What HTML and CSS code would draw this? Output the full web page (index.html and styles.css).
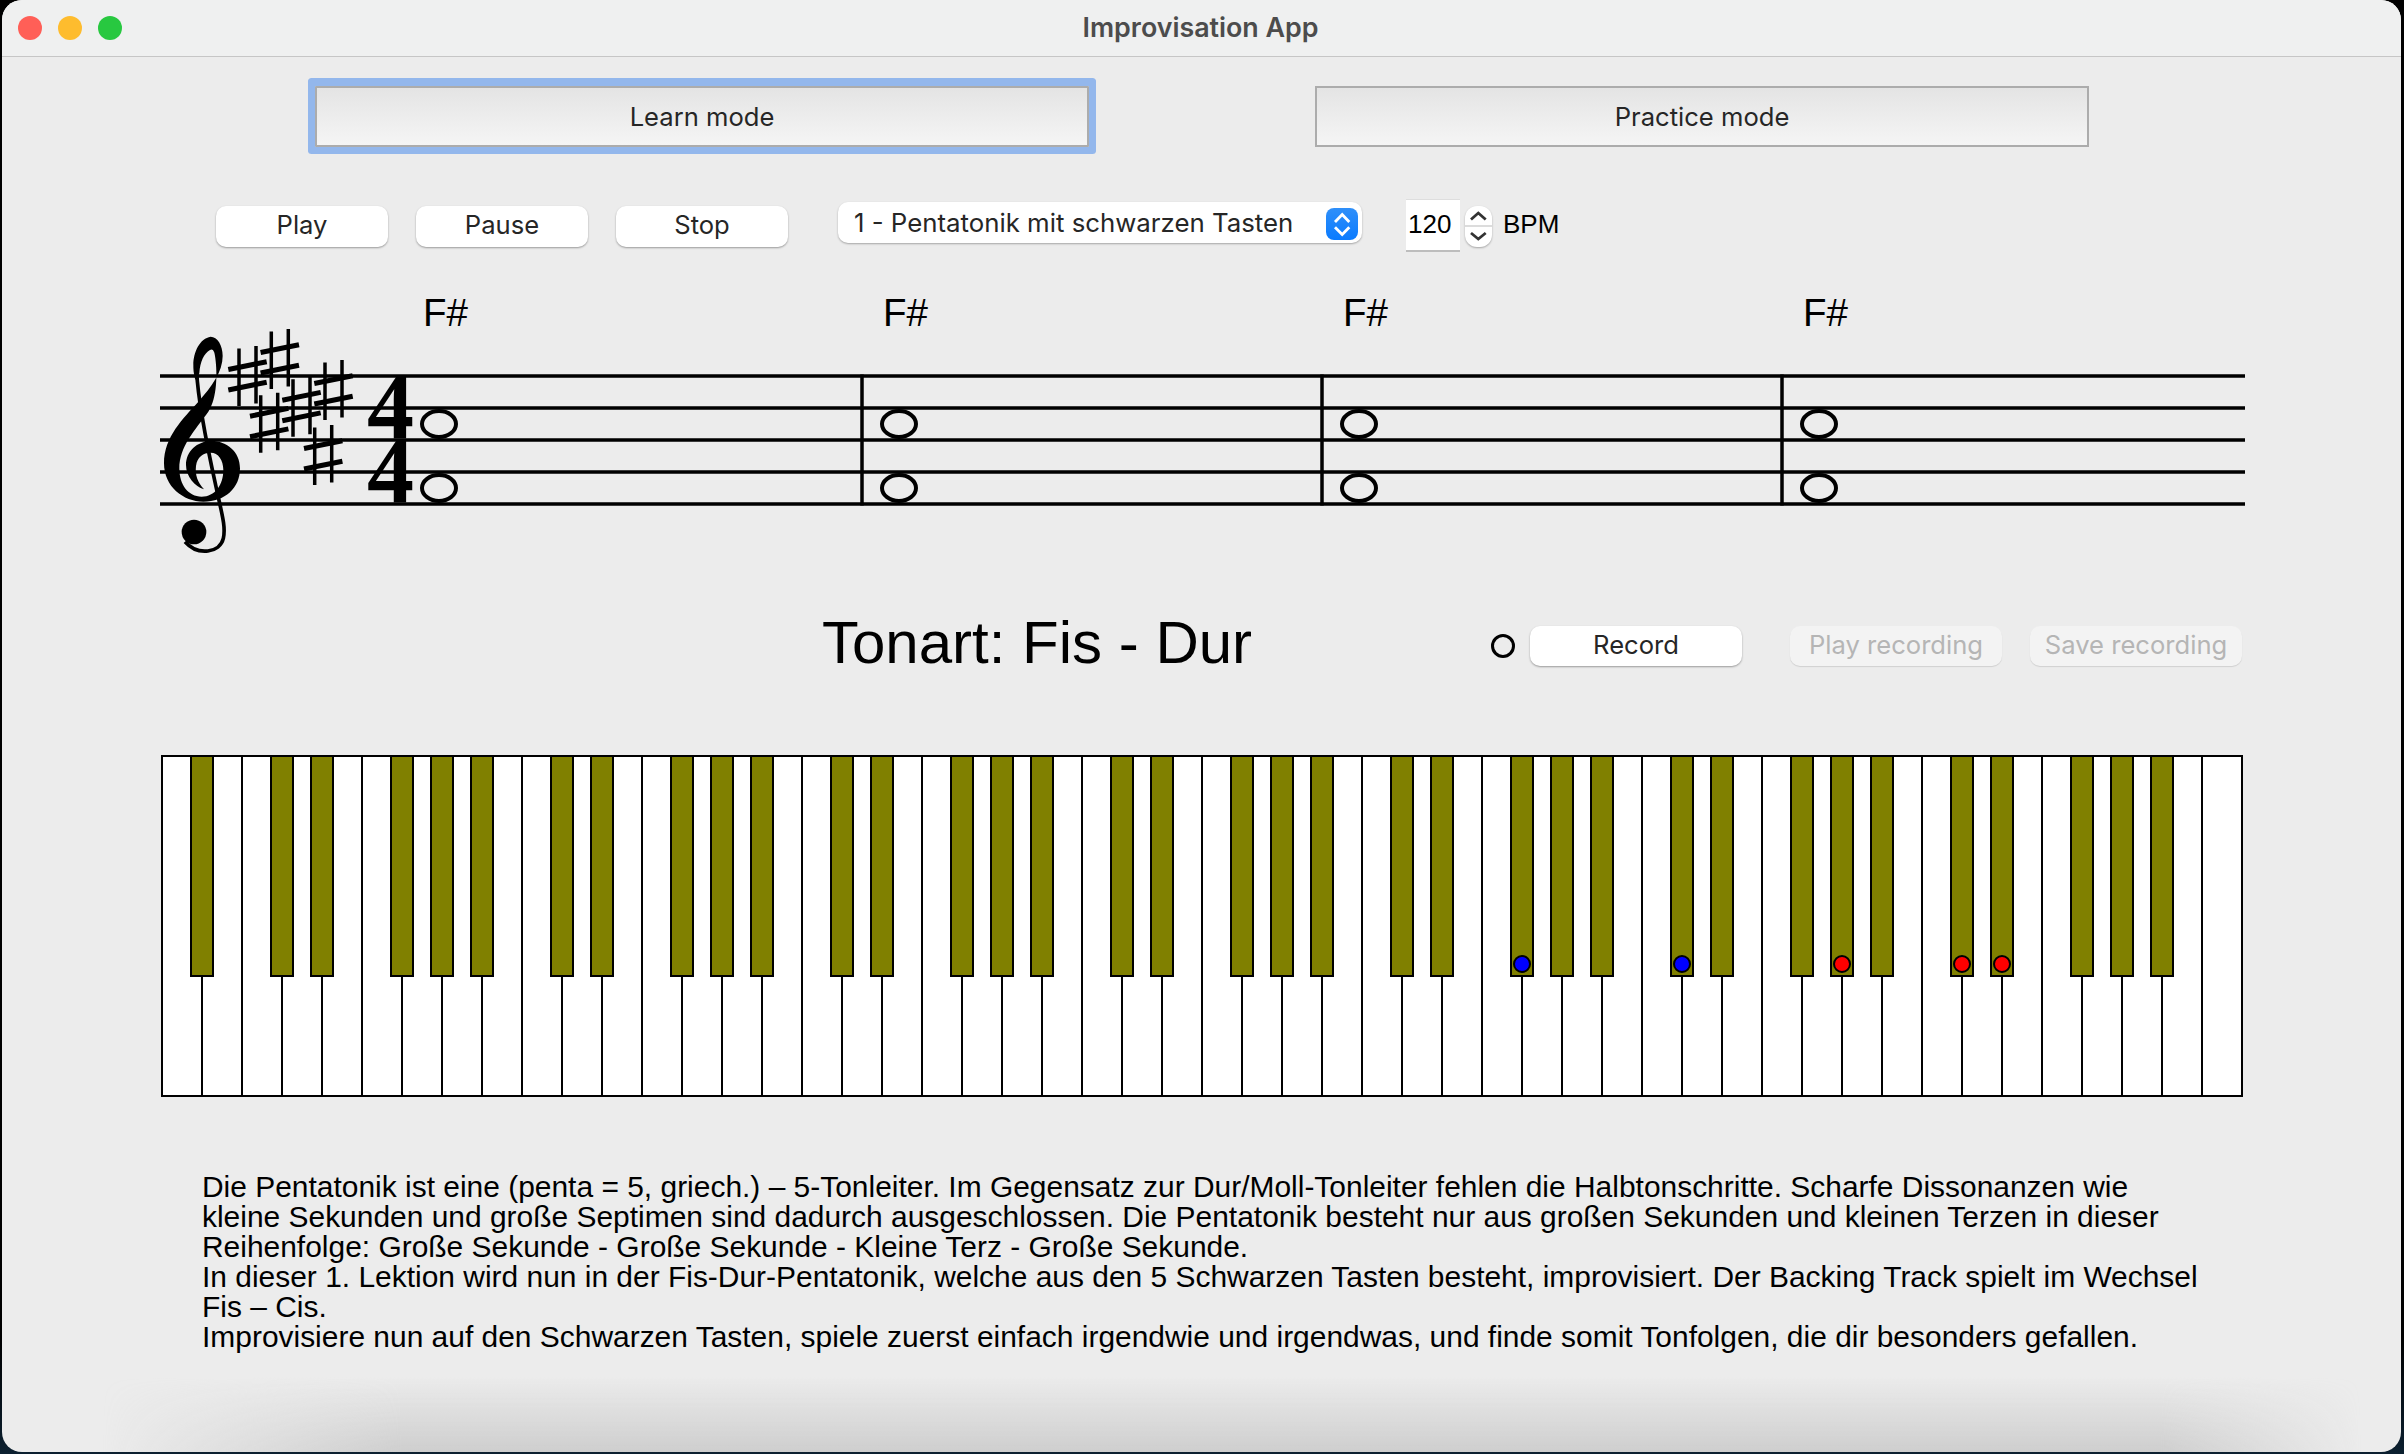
FILE: index.html
```html
<!DOCTYPE html>
<html lang="de">
<head>
<meta charset="utf-8">
<title>Improvisation App</title>
<link rel="stylesheet" href="styles.css">
</head>
<body>
<div class="window">
  <header class="titlebar">
    <div class="lights"><span class="light red"></span><span class="light yellow"></span><span class="light green"></span></div>
    <div class="title">Improvisation App</div>
  </header>
  <main class="content">
    <div class="modes">
      <button class="mode focused">Learn mode</button>
      <button class="mode">Practice mode</button>
    </div>
    <div class="transport">
      <button class="push">Play</button>
      <button class="push">Pause</button>
      <button class="push">Stop</button>
      <div class="select">
        <span>1 - Pentatonik mit schwarzen Tasten</span>
        <span class="select-arrows">
          <svg viewBox="0 0 32 32" width="32" height="32"><path class="chev-white" d="M9 14 16.200 6.600 23.300 14M9 19.300 16.200 26.600 23.300 19.300"/></svg>
        </span>
      </div>
      <div class="spin-input">120</div>
      <div class="stepper">
        <svg viewBox="0 0 27 41" width="27" height="41"><path class="chev-sep" d="M0 20H27"/><path class="chev-dark" d="M6 13.500 13.300 7 20.700 13.500M6 27 13.300 33 20.700 27"/></svg>
      </div>
      <div class="bpm">BPM</div>
    </div>
    <svg class="score" viewBox="160 285 2090 270" width="2090" height="270">
      <defs>
        <g id="sharp">
          <path class="sharp-v" d="M239 348.500V406M256 346V403.500"/>
          <path class="sharp-h" d="M228.300 369.500 266.700 361.700M228.300 390 266.700 382.200"/>
        </g>
      </defs>
      <path class="staff" d="M160 376H2245M160 408H2245M160 440H2245M160 472H2245M160 504H2245"/>
      <path class="bar" d="M862 374.500V505.500M1322 374.500V505.500M1782 374.500V505.500"/>
      <g transform="translate(140 280) scale(.33333)">
        <path class="clef" d="M212 170C232 170 248 195 248 228 248 275 215 320 175 365 130 415 72 470 72 550 72 620 130 665 190 665 255 665 300 625 300 565 300 515 260 483 215 483 170 483 138 515 138 555 138 590 165 620 192 628 172 605 165 585 168 558 172 530 190 518 212 518 235 518 250 540 250 570 250 615 225 650 185 650 145 650 118 615 118 565 118 500 165 450 205 395 232 355 232 280 226 235 224 212 218 205 210 210 192 220 180 245 178 280L166 300C160 280 160 265 160 255 160 215 180 175 212 170Z"/>
        <path class="clef-stem" d="M170 275C173 340 195 470 228 620 245 700 258 740 250 775 240 818 175 830 135 785"/>
        <circle class="clef-ball" cx="162" cy="756" r="37"/>
      </g>
      <use href="#sharp"/>
      <use href="#sharp" x="32.300" y="-17"/>
      <use href="#sharp" x="21.700" y="46.700"/>
      <use href="#sharp" x="54" y="30.700"/>
      <use href="#sharp" x="86" y="14"/>
      <use href="#sharp" x="75.700" y="79"/>
      <text class="timesig" x="367" y="438">4</text>
      <text class="timesig" x="367" y="502">4</text>
      <g class="notes">
        <ellipse cx="439" cy="424" rx="17" ry="13"/><ellipse cx="439" cy="488" rx="17" ry="13"/>
        <ellipse cx="899" cy="424" rx="17" ry="13"/><ellipse cx="899" cy="488" rx="17" ry="13"/>
        <ellipse cx="1359" cy="424" rx="17" ry="13"/><ellipse cx="1359" cy="488" rx="17" ry="13"/>
        <ellipse cx="1819" cy="424" rx="17" ry="13"/><ellipse cx="1819" cy="488" rx="17" ry="13"/>
      </g>
      <text class="chord" x="423" y="326">F#</text>
      <text class="chord" x="883" y="326">F#</text>
      <text class="chord" x="1343" y="326">F#</text>
      <text class="chord" x="1803" y="326">F#</text>
    </svg>
    <div class="record-row">
      <h1 class="key">Tonart: Fis - Dur</h1>
      <span class="rec-led"></span>
      <button class="push rec">Record</button>
      <button class="push rec rec-play" disabled>Play recording</button>
      <button class="push rec rec-save" disabled>Save recording</button>
    </div>
    <div class="piano">
      <div class="w"></div>
      <div class="w s"><i class="b"></i></div>
      <div class="w"></div>
      <div class="w s"><i class="b"></i></div>
      <div class="w s"><i class="b"></i></div>
      <div class="w"></div>
      <div class="w s"><i class="b"></i></div>
      <div class="w s"><i class="b"></i></div>
      <div class="w s"><i class="b"></i></div>
      <div class="w"></div>
      <div class="w s"><i class="b"></i></div>
      <div class="w s"><i class="b"></i></div>
      <div class="w"></div>
      <div class="w s"><i class="b"></i></div>
      <div class="w s"><i class="b"></i></div>
      <div class="w s"><i class="b"></i></div>
      <div class="w"></div>
      <div class="w s"><i class="b"></i></div>
      <div class="w s"><i class="b"></i></div>
      <div class="w"></div>
      <div class="w s"><i class="b"></i></div>
      <div class="w s"><i class="b"></i></div>
      <div class="w s"><i class="b"></i></div>
      <div class="w"></div>
      <div class="w s"><i class="b"></i></div>
      <div class="w s"><i class="b"></i></div>
      <div class="w"></div>
      <div class="w s"><i class="b"></i></div>
      <div class="w s"><i class="b"></i></div>
      <div class="w s"><i class="b"></i></div>
      <div class="w"></div>
      <div class="w s"><i class="b"></i></div>
      <div class="w s"><i class="b"></i></div>
      <div class="w"></div>
      <div class="w s"><i class="b"><i class="dot blue"></i></i></div>
      <div class="w s"><i class="b"></i></div>
      <div class="w s"><i class="b"></i></div>
      <div class="w"></div>
      <div class="w s"><i class="b"><i class="dot blue"></i></i></div>
      <div class="w s"><i class="b"></i></div>
      <div class="w"></div>
      <div class="w s"><i class="b"></i></div>
      <div class="w s"><i class="b"><i class="dot red"></i></i></div>
      <div class="w s"><i class="b"></i></div>
      <div class="w"></div>
      <div class="w s"><i class="b"><i class="dot red"></i></i></div>
      <div class="w s"><i class="b"><i class="dot red"></i></i></div>
      <div class="w"></div>
      <div class="w s"><i class="b"></i></div>
      <div class="w s"><i class="b"></i></div>
      <div class="w s"><i class="b"></i></div>
      <div class="w"></div>
    </div>
    <p class="lesson">Die Pentatonik ist eine (penta = 5, griech.) – 5-Tonleiter. Im Gegensatz zur Dur/Moll-Tonleiter fehlen die Halbtonschritte. Scharfe Dissonanzen wie<br>kleine Sekunden und große Septimen sind dadurch ausgeschlossen. Die Pentatonik besteht nur aus großen Sekunden und kleinen Terzen in dieser<br>Reihenfolge: Große Sekunde - Große Sekunde - Kleine Terz - Große Sekunde.<br>In dieser 1. Lektion wird nun in der Fis-Dur-Pentatonik, welche aus den 5 Schwarzen Tasten besteht, improvisiert. Der Backing Track spielt im Wechsel<br>Fis – Cis.<br>Improvisiere nun auf den Schwarzen Tasten, spiele zuerst einfach irgendwie und irgendwas, und finde somit Tonfolgen, die dir besonders gefallen.</p>
  </main>
</div>
</body>
</html>
```

FILE: styles.css
```css
* { box-sizing: border-box; }
html, body { margin: 0; height: 100%; }
html { background: linear-gradient(to bottom, #000 92%, #0c2030); }
body { overflow: hidden; }

.window {
  position: relative;
  margin: 0 3px 0 2px;
  height: 1452px;
  background: #ececec;
  border-radius: 20px;
  overflow: hidden;
  font-family: "Liberation Sans", sans-serif;
  color: #000;
}
.window::after {
  content: "";
  position: absolute;
  left: 100px;
  right: 40px;
  bottom: 0;
  height: 75px;
  pointer-events: none;
  background: linear-gradient(to bottom, rgba(190,190,190,0), rgba(190,190,190,.65));
  -webkit-mask-image: linear-gradient(to right, transparent, #000 300px, #000 calc(100% - 200px), transparent);
  mask-image: linear-gradient(to right, transparent, #000 300px, #000 calc(100% - 200px), transparent);
}

.titlebar {
  position: relative;
  height: 57px;
  background: #eff0f0;
  border-bottom: 1px solid #c6c6c6;
  display: flex;
  align-items: center;
  justify-content: center;
}
.lights {
  position: absolute;
  left: 16px;
  top: 16px;
  display: flex;
  gap: 16px;
}
.light { width: 24px; height: 24px; border-radius: 50%; }
.red { background: #ff5f57; }
.yellow { background: #febc2e; }
.green { background: #28c840; }
.title {
  font-family: Inter, sans-serif;
  font-size: 26.800px;
  font-weight: 600;
  color: #4c4c4c;
  margin: 0 2px 3px 0;
}

button { font-family: Inter, sans-serif; padding: 0; }

.modes {
  display: flex;
  gap: 226px;
  margin-top: 29px;
  padding-left: 313px;
}
.mode {
  width: 774px;
  height: 61px;
  border: 2px solid #acacac;
  background: linear-gradient(to bottom, #e4e4e4, #f5f5f5);
  font-size: 25.600px;
  color: #262626;
}
.focused { box-shadow: 0 0 0 7px #93b7ec, 0 -1px 0 7px #93b7ec; border-radius: 1px; }

.transport {
  display: flex;
  align-items: flex-start;
  margin-top: 52px;
  padding-left: 214px;
  height: 54px;
}
.push {
  width: 172px;
  height: 41px;
  margin-top: 7px;
  margin-right: 28px;
  padding-bottom: 4px;
  border: 0;
  border-radius: 10px;
  background: #fff;
  box-shadow: 0 1px 2px rgba(0,0,0,.35);
  font-size: 25.600px;
  color: #262626;
}
.select {
  width: 524px;
  height: 41px;
  margin-top: 3px;
  margin-left: 22px;
  padding-left: 16px;
  padding-right: 4px;
  display: flex;
  align-items: center;
  justify-content: space-between;
  background: #fff;
  border-radius: 10px;
  box-shadow: 0 1px 2px rgba(0,0,0,.3);
  font-family: Inter, sans-serif;
  font-size: 25.800px;
  color: #262626;
}
.select-arrows {
  display: block;
  width: 32px;
  height: 32px;
  margin-top: 2px;
  border-radius: 8px;
  background: linear-gradient(to bottom, #2f8ff9, #0a7bff);
}
.select-arrows svg, .stepper svg { display: block; }
.chev-white { fill: none; stroke: #fff; stroke-width: 2.800; }
.chev-dark { fill: none; stroke: #333; stroke-width: 2.800; }
.chev-sep { fill: none; stroke: #dcdcdc; stroke-width: 2; }
.spin-input {
  width: 54px;
  height: 53px;
  margin-left: 44px;
  background: #fff;
  border-top: 1px solid #dedede;
  border-bottom: 2px solid #bdbdbd;
  font-size: 26px;
  line-height: 49px;
  padding-left: 2px;
}
.stepper {
  width: 27px;
  height: 41px;
  margin-top: 7px;
  margin-left: 5px;
  background: #fff;
  border-radius: 12px;
  box-shadow: 0 1px 2px rgba(0,0,0,.3);
}
.bpm {
  margin-left: 11px;
  font-size: 26px;
  line-height: 50px;
}

.score { display: block; margin: 32px 0 0 158px; }
.staff { fill: none; stroke: #000; stroke-width: 3.500; }
.bar { fill: none; stroke: #000; stroke-width: 3.500; }
.sharp-v { fill: none; stroke: #000; stroke-width: 3.500; }
.sharp-h { fill: none; stroke: #000; stroke-width: 5; }
.clef, .clef-ball { fill: #000; }
.clef-stem { fill: none; stroke: #000; stroke-width: 11; }
.timesig { font-family: "Liberation Serif", serif; font-weight: 700; font-size: 94px; fill: #000; }
.notes ellipse { fill: none; stroke: #000; stroke-width: 4; }
.chord { font-family: "Liberation Sans", sans-serif; font-size: 38.500px; fill: #000; }

.record-row {
  display: flex;
  align-items: center;
  height: 40px;
  margin-top: 71px;
  padding-left: 820px;
}
.key {
  margin: 0 0 6px;
  width: 669px;
  font-size: 60px;
  line-height: 48px;
  font-weight: 400;
  white-space: nowrap;
}
.rec-led {
  width: 24px;
  height: 24px;
  border: 3.500px solid #000;
  border-radius: 50%;
  margin-right: 15px;
}
.rec { width: 212px; height: 40px; margin-top: 0; margin-right: 48px; }
.rec-play { margin-right: 28px; }
.rec-save { margin-right: 0; }
.rec[disabled] { background: #f3f3f3; color: #b5b5b5; box-shadow: 0 1px 1px rgba(0,0,0,.12); }

.piano {
  display: flex;
  width: 2082px;
  height: 342px;
  margin: 89px 0 0 159px;
  background: #fff;
  border-top: 2px solid #000;
  border-bottom: 2px solid #000;
  border-right: 2px solid #000;
}
.w {
  position: relative;
  flex: 0 0 40px;
  border-left: 2px solid #000;
}
.b {
  position: absolute;
  display: block;
  left: -13px;
  top: 0;
  width: 24px;
  height: 220px;
  background: #808000;
  border: 2px solid #000;
  border-top: 0;
}
.dot {
  position: absolute;
  display: block;
  left: 1px;
  bottom: 2px;
  width: 18px;
  height: 18px;
  border: 2px solid #000;
  border-radius: 50%;
}
.dot.blue { background: #0000ff; }
.dot.red { background: #ff0000; }

.lesson {
  margin: 75px 0 0 200px;
  font-size: 29.950px;
  line-height: 30px;
  white-space: nowrap;
}
```
